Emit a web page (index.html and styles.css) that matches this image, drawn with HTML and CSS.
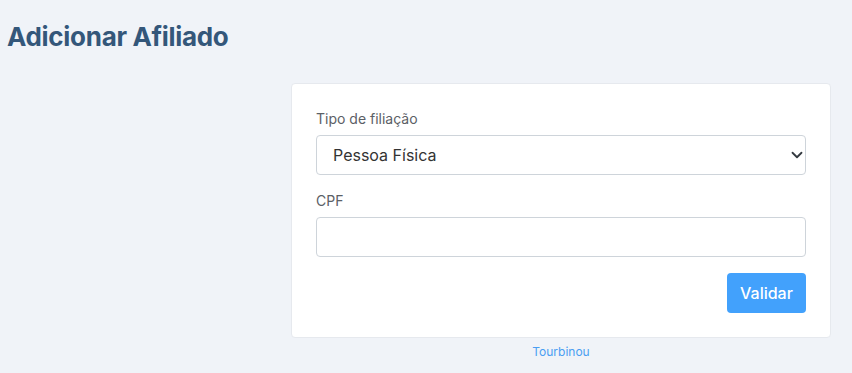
FILE: index.html
```html
<!DOCTYPE html>
<html lang="pt-BR">
<head>
    <meta charset="UTF-8">
    <meta name="viewport" content="width=device-width, initial-scale=1.0">
    <title>Adicionar Afiliado</title>
    <link rel="stylesheet" href="styles.css">
</head>
<body>

<div class="page">
    <h1 class="page-title">Adicionar Afiliado</h1>

    <div class="layout">
        <div class="side"></div>

        <div class="main">
            <form class="card" onsubmit="return false">
                <div class="field">
                    <label for="tipo">Tipo de filiação</label>
                    <div class="select-wrap">
                        <select id="tipo">
                            <option>Pessoa Física</option>
                            <option>Pessoa Jurídica</option>
                        </select>
                        <svg class="chevron" width="12" height="12" viewBox="0 0 16 16">
                            <path d="M2 5l6 6 6-6" fill="none" stroke="#343a40" stroke-width="2.4" stroke-linecap="round" stroke-linejoin="round"/>
                        </svg>
                    </div>
                </div>

                <div class="field">
                    <label for="cpf">CPF</label>
                    <input type="text" id="cpf">
                </div>

                <div class="actions">
                    <button type="submit" class="btn-primary">Validar</button>
                </div>
            </form>

            <div class="footer">
                <a href="#">Tourbinou</a>
            </div>
        </div>
    </div>
</div>

</body>
</html>
```

FILE: styles.css
```css
body {
    margin: 0;
    background-color: #f0f3f8;
    font-family: Inter, "Noto Sans", Arial, sans-serif;
    color: #333;
}

.page {
    padding: 18px 21px 0 7px;
}

.page-title {
    margin: 0;
    font-size: 26px;
    font-weight: 700;
    letter-spacing: -0.3px;
    color: #34577a;
    line-height: 38px;
}

.layout {
    display: grid;
    grid-template-columns: 284px 1fr;
    margin-top: 27px;
}

.card {
    background: #fff;
    border: 1px solid #e6e9ee;
    border-radius: 4px;
    padding: 25px 24px 24px 24px;
}

.field {
    margin-bottom: 16px;
}

.field label {
    display: block;
    font-size: 14px;
    color: #5b6066;
    line-height: 20px;
    margin-bottom: 6px;
}

.field input,
.field select {
    display: block;
    width: 100%;
    box-sizing: border-box;
    height: 40px;
    padding: 0 16px;
    font-family: inherit;
    font-size: 16px;
    color: #333;
    background: #fff;
    border: 1px solid #ced4da;
    border-radius: 4px;
    -webkit-appearance: none;
    appearance: none;
}

.select-wrap {
    position: relative;
}

.chevron {
    position: absolute;
    right: 3px;
    top: 14px;
    pointer-events: none;
}

.actions {
    display: flex;
    justify-content: flex-end;
}

.btn-primary {
    width: 79px;
    height: 40px;
    font-family: inherit;
    font-size: 16px;
    font-weight: 500;
    color: #fff;
    background-color: #42a1fc;
    border: none;
    border-radius: 4px;
    cursor: pointer;
}

.footer {
    text-align: center;
    padding-top: 6px;
    font-size: 12px;
}

.footer a {
    color: #4a9ef2;
    text-decoration: none;
}
```
